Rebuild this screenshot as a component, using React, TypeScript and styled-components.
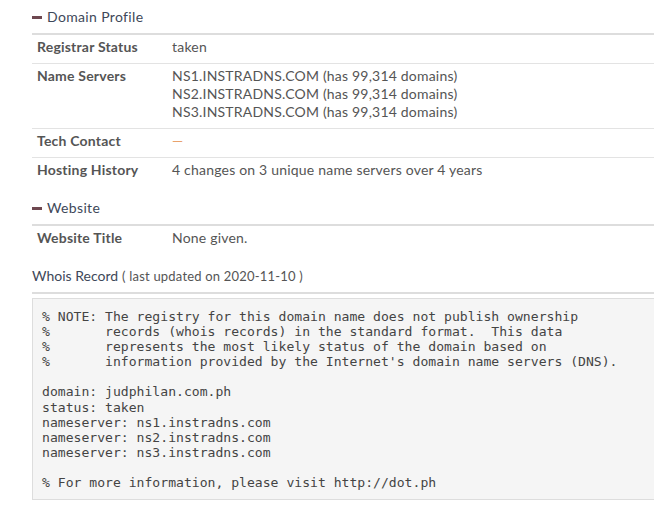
import styled, { createGlobalStyle } from 'styled-components';

const GlobalStyle = createGlobalStyle`
    html, body {
        margin: 0;
        padding: 0;
        background: #fff;
        overflow: hidden;
    }
    body {
        font-family: Lato, "Open Sans", sans-serif;
        color: #555;
    }
`;

const Page = styled.div`
    padding: 7px 0 0 32px;
    width: calc(100% + 12px);
    box-sizing: border-box;
`;

const Section = styled.section`
    margin-bottom: 12px;
`;

const Heading = styled.h3<{ $spaced?: boolean }>`
    display: flex;
    align-items: center;
    gap: 5px;
    margin: 0;
    padding: 0 0 6px;
    height: 20px;
    line-height: 20px;
    font-size: 14px;
    font-weight: 400;
    letter-spacing: ${p => (p.$spaced ? '0.35px' : '0')};
    color: #3e4859;
    border-bottom: 2px solid #ddd;
`;

const Note = styled.span`
    font-size: 13px;
    letter-spacing: 0.2px;
    color: #555;
    margin-left: -1px;
`;

const Row = styled.div<{ $last?: boolean }>`
    display: grid;
    grid-template-columns: 135px 1fr;
    padding: 3px 0 7px 5px;
    line-height: 18px;
    font-size: 14px;
    letter-spacing: 0.2px;
    border-bottom: ${p => (p.$last ? 'none' : '1px solid #e3e3e3')};
`;

const Label = styled.div`
    font-weight: 700;
    color: #555;
`;

const Value = styled.div<{ $muted?: boolean }>`
    color: ${p => (p.$muted ? '#e9a26c' : '#555')};
`;

const Pre = styled.pre`
    margin: 4px 0 0;
    padding: 10px 9px 9px;
    background: #f5f5f5;
    border: 1px solid #ddd;
    font-family: "DejaVu Sans Mono", "Liberation Mono", monospace;
    font-size: 13.1px;
    line-height: 15.1px;
    color: #444;
    white-space: pre;
`;

const Minus = () => (
    <svg width="10" height="10" viewBox="0 0 10 10">
        <rect x="0" y="4" width="10" height="3" fill="#6e4850" />
    </svg>
);

const whois = `% NOTE: The registry for this domain name does not publish ownership
%       records (whois records) in the standard format.  This data
%       represents the most likely status of the domain based on
%       information provided by the Internet's domain name servers (DNS).

domain: judphilan.com.ph
status: taken
nameserver: ns1.instradns.com
nameserver: ns2.instradns.com
nameserver: ns3.instradns.com

% For more information, please visit http://dot.ph`;

export default function App() {
    return (
        <>
            <GlobalStyle />
            <Page>
                <Section>
                    <Heading $spaced>
                        <Minus />
                        Domain Profile
                    </Heading>
                    <Row>
                        <Label>Registrar Status</Label>
                        <Value>taken</Value>
                    </Row>
                    <Row>
                        <Label>Name Servers</Label>
                        <Value>
                            NS1.INSTRADNS.COM (has 99,314 domains)
                            <br />
                            NS2.INSTRADNS.COM (has 99,314 domains)
                            <br />
                            NS3.INSTRADNS.COM (has 99,314 domains)
                        </Value>
                    </Row>
                    <Row>
                        <Label>Tech Contact</Label>
                        <Value $muted>—</Value>
                    </Row>
                    <Row $last>
                        <Label>Hosting History</Label>
                        <Value>4 changes on 3 unique name servers over 4 years</Value>
                    </Row>
                </Section>

                <Section>
                    <Heading $spaced>
                        <Minus />
                        Website
                    </Heading>
                    <Row $last>
                        <Label>Website Title</Label>
                        <Value>None given.</Value>
                    </Row>
                </Section>

                <Section>
                    <Heading>
                        Whois Record <Note>( last updated on 2020-11-10 )</Note>
                    </Heading>
                    <Pre>{whois}</Pre>
                </Section>
            </Page>
        </>
    );
}
